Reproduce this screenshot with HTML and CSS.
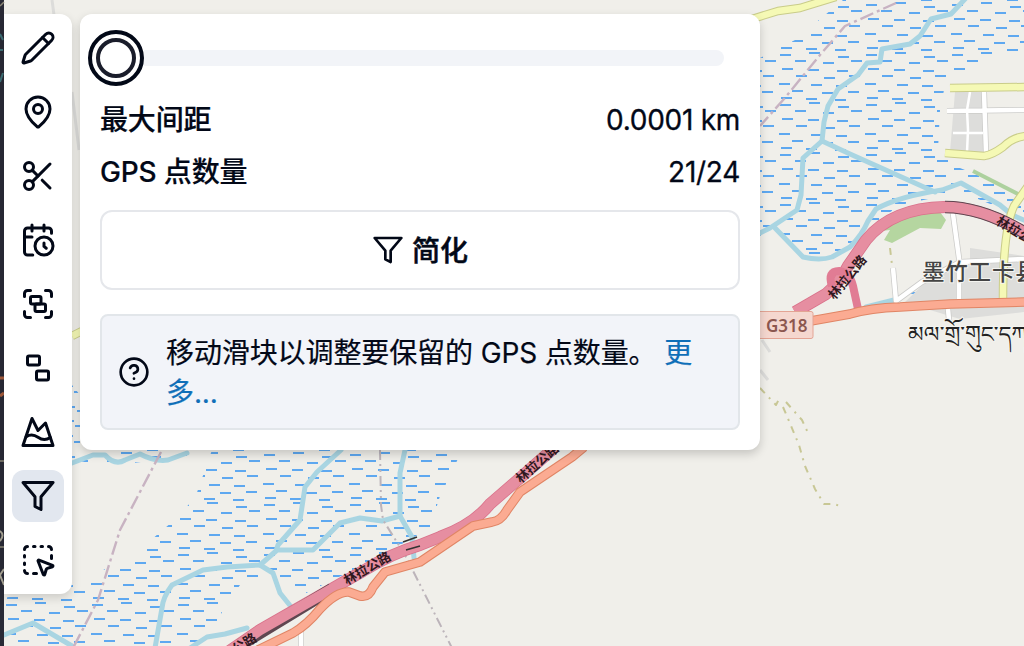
FILE: index.html
```
<!DOCTYPE html>
<html lang="zh-CN">
<head>
  <meta charset="UTF-8">
  <title>简化</title>
  <link rel="stylesheet" href="styles.css">
</head>
<body>
  <svg class="map" viewBox="0 0 1024 646" aria-hidden="true">
    <defs>
      <pattern id="marsh" width="86" height="50" patternUnits="userSpaceOnUse" patternTransform="translate(4 2)">
        <path d="M2 3h11M31 1h11M60 5h11M17 9h11M45 11h11M73 9h11M4 17h11M30 18h11M59 19h11M18 24h11M46 26h11M71 24h11M1 32h11M33 33h11M58 34h11M14 39h11M44 41h11M70 40h11M3 46h11M28 47h11M57 48h11" stroke="#5ea8f0" stroke-width="1.8"/>
      </pattern>
    </defs>

    <!-- wetland -->
    <path fill="url(#marsh)" d="M843 0H1024V50L990 58 958 76 944 90 940 110 938 150 955 166 990 180 1024 195V222L1000 208 961 192 900 205 868 228 850 247 830 258H803L775 230 760 236V58L795 40Z"/>
    <path fill="url(#marsh)" d="M212 450H462L450 476 440 496 430 528 400 545 345 574 300 596 270 578 240 585 222 612 206 646H4V598L72 584 130 558 172 522 195 498Z"/>
    <path fill="url(#marsh)" d="M72 385L80 395V448H187V456L110 466 72 460Z"/>
    <path fill="url(#marsh)" d="M868 302L950 278 945 292 895 300 866 308Z"/>

    <!-- built-up areas and parks -->
    <path fill="#dddddb" d="M955 92H985L984 152H950ZM905 302L932 276 970 264V248L1024 256V312L960 319 930 310Z"/>
    <path fill="#b5d6a0" d="M872 232L880 220 905 208 940 202V212L946 220 941 229 920 228 892 243 884 240 890 230Z"/>
    <path class="green" d="M973 171L1022 196"/>

    <!-- rivers -->
    <g class="river">
      <path d="M966 -2L951 14 931 19 920 36 910 44 882 49 880 62 867 63 858 75 838 89 828 106 824 122 822 141 803 158 801 195 797 210 770 228 758 234"/>
      <path d="M822 141L850 154 935 192"/>
      <path d="M775 228L803 257Q820 261 832 257L850 247Q862 235 868 221L876 209Q900 196 942 190L961 183 1000 205 1012 215 1026 221"/>
      <path d="M866 307L898 299"/>
      <path d="M72 463L93 455 105 455Q115 466 125 460L140 454Q155 462 168 460L187 453"/>
      <path d="M341 450L317 472 305 487 300 520 278 545 276 551 260 565 227 567 203 570 172 585Q163 597 162 608L155 648"/>
      <path d="M277 550H313L340 523 360 518 382 521 400 516"/>
      <path d="M405 450L400 473 400 516 412 537 414 558"/>
      <path d="M260 565L273 573 280 593 292 608"/>
      <path d="M190 648L207 637 225 634 247 628"/>
      <path d="M4 635L33 623 72 646"/>
    </g>

    <!-- boundaries -->
    <path class="boundary" d="M896 3L845 26 820 55 784 99 760 126M161 452L120 530 98 600 72 650"/>
    <path class="boundary thin" d="M380 450L381 505 383 520 405 555 452 648"/>
    <path class="hairline" d="M52 0L54 15M72 92L79 150M762 340L770 352M760 370L768 380"/>

    <!-- dirt tracks -->
    <path class="track" d="M760 388L776 405 780 397M783 407L789 421 799 445 805 466 815 489 824 504 834 504 843 507M786 402L793 410 802 420 809 435M890 248L892 265"/>

    <!-- minor roads -->
    <g class="road-case">
      <path d="M947 111L1024 110M984 92L986 152M952 207L959 258 959 299M893 268L896 301 922 282 960 262 1024 259M301 626V646M948 309L949 320"/>
    </g>
    <g class="road">
      <path d="M947 111L1024 110M984 92L986 152M952 207L959 258 959 299M893 268L896 301 922 282 960 262 1024 259M301 626V646M948 309L949 320"/>
      <path class="lane" d="M970 92L967 110 968 130 967 152M953 133H983"/>
    </g>
    <g class="yellow-case">
      <path d="M752 19L778 11 800 8 836 -3M950 88L1026 87M945 153L984 156Q992 155 1003 147 1013 137 1026 136M1030 183L1014 206Q1003 230 1003 298M72 336L82 331"/>
    </g>
    <g class="yellow">
      <path d="M752 19L778 11 800 8 836 -3M950 88L1026 87M945 153L984 156Q992 155 1003 147 1013 137 1026 136M1030 183L1014 206Q1003 230 1003 298M72 336L82 331"/>
    </g>

    <!-- motorway -->
    <g class="motor-case">
      <path d="M795 312L826 294Q840 282 848 266L866 240Q892 208 945 207 984 207 1030 236M225 654L260 630 363 571Q390 554 420 545L440 537Q473 525 490 504L520 478 554 448"/>
    </g>
    <path class="tunnel" d="M945 207Q984 207 1030 236M240 645L332 589"/>
    <g class="motor">
      <path d="M795 312L826 294Q840 282 848 266L866 240Q892 208 945 207 984 207 1030 236M225 654L260 630 363 571Q390 554 420 545L440 537Q473 525 490 504L520 478 554 448"/>
      <path class="ramp" d="M832 286Q827 271 839 271 850 273 853 286L858 309"/>
    </g>
    <path d="M403 542L417 537M406 550L420 546" stroke="#333" stroke-width="1.7"/>

    <!-- national road -->
    <g class="trunk-case">
      <path d="M805 322L850 314Q870 308 900 307L950 304 1026 302M258 650L293 633Q307 625 320 609 337 591 349 592L360 596Q369 598 373 587L385 572 420 562 445 545 473 526 492 522Q501 521 507 510L520 492 572 457 584 447"/>
    </g>
    <g class="trunk">
      <path d="M805 322L850 314Q870 308 900 307L950 304 1026 302M258 650L293 633Q307 625 320 609 337 591 349 592L360 596Q369 598 373 587L385 572 420 562 445 545 473 526 492 522Q501 521 507 510L520 492 572 457 584 447"/>
    </g>

    <!-- labels -->
    <g class="road-name">
      <text transform="translate(367 568) rotate(-30)" y="5">林拉公路</text>
      <text transform="translate(537 463) rotate(-41)" y="5">林拉公路</text>
      <text transform="translate(847 277) rotate(-51)" y="5">林拉公路</text>
      <text transform="translate(1020 233) rotate(32)" y="5">林拉公路</text>
      <text transform="translate(233 650) rotate(-32)" y="5">林拉公路</text>
    </g>
    <rect x="750" y="311.500" width="63" height="27" rx="2" fill="#f5d7cf" stroke="#e3a494"/>
    <text class="shield" x="766" y="332">G318</text>
    <text class="town" x="922" y="280">墨竹工卡县</text>
    <text class="town tibetan" x="908" y="342">མལ་གྲོ་གུང་དཀར</text>

    <!-- edge of the neighbouring window -->
    <path fill="#292a36" d="M0 0H4V646H0Z"/>
    <path d="M0 6L4 2M0 461H4M0 547H4" stroke="#8c8878" stroke-width="1.500"/>
    <path d="M0 34L3 40M0 50H3M0 82L3 73" stroke="#3f7177" stroke-width="2"/>
    <path d="M0 378H4M0 396L4 393" stroke="#a45b3c" stroke-width="3"/>
    <path d="M0 531Q5 535 0 541M4 569L0 575 4 585" stroke="#aaa697" stroke-width="2" fill="none"/>
  </svg>

  <main class="tools">
    <nav class="toolbar">
      <button class="tool"><svg class="icon" viewBox="0 0 24 24"><path d="M21.174 6.812a1 1 0 0 0-3.986-3.987L3.842 16.174a2 2 0 0 0-.5.83l-1.321 4.352a.5.5 0 0 0 .623.622l4.353-1.32a2 2 0 0 0 .83-.497z"/><path d="m15 5 4 4"/></svg></button>
      <button class="tool"><svg class="icon" viewBox="0 0 24 24"><path d="M20 10c0 4.993-5.539 10.193-7.399 11.799a1 1 0 0 1-1.202 0C9.539 20.193 4 14.993 4 10a8 8 0 0 1 16 0"/><circle cx="12" cy="10" r="3"/></svg></button>
      <button class="tool"><svg class="icon" viewBox="0 0 24 24"><circle cx="6" cy="6" r="3"/><path d="M8.120 8.120 12 12"/><path d="M20 4 8.120 15.880"/><circle cx="6" cy="18" r="3"/><path d="M14.800 14.800 20 20"/></svg></button>
      <button class="tool"><svg class="icon" viewBox="0 0 24 24"><path d="M21 7.500V6a2 2 0 0 0-2-2H5a2 2 0 0 0-2 2v14a2 2 0 0 0 2 2h3.500"/><path d="M16 2v4M8 2v4M3 10h5"/><path d="M17.500 17.500 16 16.300V14"/><circle cx="16" cy="16" r="6"/></svg></button>
      <button class="tool"><svg class="icon" viewBox="0 0 24 24"><path d="M3 7V5c0-1.100.9-2 2-2h2"/><path d="M17 3h2c1.100 0 2 .9 2 2v2"/><path d="M21 17v2c0 1.100-.9 2-2 2h-2"/><path d="M7 21H5c-1.100 0-2-.9-2-2v-2"/><rect width="7" height="5" x="7" y="7" rx="1"/><rect width="7" height="5" x="10" y="12" rx="1"/></svg></button>
      <button class="tool"><svg class="icon" viewBox="0 0 24 24"><rect width="8" height="6" x="5" y="4" rx="1"/><rect width="8" height="6" x="11" y="14" rx="1"/></svg></button>
      <button class="tool"><svg class="icon" viewBox="0 0 24 24"><path d="m8 3 4 8 5-5 5 15H2L8 3z"/><path d="M4.140 15.080c2.620-1.570 5.240-1.430 7.860.42 2.740 1.940 5.490 2 8.230.19"/></svg></button>
      <button class="tool active"><svg class="icon" viewBox="0 0 24 24"><path d="M22 3H2l8 9.460V19l4 2v-8.540L22 3z"/></svg></button>
      <button class="tool"><svg class="icon" viewBox="0 0 24 24"><path d="M12.034 12.681a.498.498 0 0 1 .647-.647l9 3.500a.5.5 0 0 1-.033.943l-3.444 1.068a1 1 0 0 0-.66.66l-1.067 3.443a.5.5 0 0 1-.943.033z"/><path d="M5 3a2 2 0 0 0-2 2M19 3a2 2 0 0 1 2 2M5 21a2 2 0 0 1-2-2M9 3h1M9 21h2M14 3h1M3 9v1M21 9v2M3 14v1"/></svg></button>
    </nav>

    <section class="panel">
      <div class="slider">
        <div class="thumb"></div>
        <div class="track-bar"></div>
      </div>
      <div class="row"><span class="name">最大间距</span><span class="value">0.0001 km</span></div>
      <div class="row"><span class="name">GPS 点数量</span><span class="value">21/24</span></div>
      <button class="simplify">
        <svg class="icon small" viewBox="0 0 24 24"><path d="M22 3H2l8 9.460V19l4 2v-8.540L22 3z"/></svg>
        <span>简化</span>
      </button>
      <div class="help">
        <svg class="icon small" viewBox="0 0 24 24"><circle cx="12" cy="12" r="10"/><path d="M9.090 9a3 3 0 0 1 5.830 1c0 2-3 3-3 3"/><path d="M12 17h.01"/></svg>
        <p>移动滑块以调整要保留的 GPS 点数量。 <a>更多...</a></p>
      </div>
    </section>
  </main>
</body>
</html>
```
FILE: styles.css
```
* {
  box-sizing: border-box;
}
body {
  margin: 0;
  width: 1024px;
  height: 646px;
  overflow: hidden;
  background: #f0efea;
  color: #020817;
  font-family: Inter, "Noto Sans CJK SC", sans-serif;
  font-size: 28px;
  line-height: 40px;
}
button {
  font: inherit;
  color: inherit;
  padding: 0;
  border: none;
  background: none;
}

/* map */
.map {
  position: absolute;
  left: 0;
  top: 0;
  width: 1024px;
  height: 646px;
}
.map g path,
.boundary,
.hairline,
.track,
.green,
.tunnel {
  fill: none;
  stroke-linejoin: round;
}
.river {
  stroke: #a9d5e2;
  stroke-width: 5;
  stroke-linecap: round;
}
.green {
  stroke: #add19e;
  stroke-width: 4;
}
.boundary {
  stroke: #c8b3c2;
  stroke-width: 2.4;
  stroke-dasharray: 14 4 3 4;
}
.boundary.thin {
  stroke: #bcb4ba;
  stroke-width: 2;
  stroke-dasharray: 10 4 2 4 2 4;
}
.hairline {
  stroke: #dcdcda;
  stroke-width: 3;
}
.track {
  stroke: #c8c795;
  stroke-width: 2;
  stroke-dasharray: 7 6 2 6;
}
.road-case {
  stroke: #cbcbc9;
  stroke-width: 6;
}
.road {
  stroke: #fff;
  stroke-width: 4.5;
}
.road .lane {
  stroke-width: 2.5;
}
.yellow-case {
  stroke: #c9cc8a;
  stroke-width: 8.5;
}
.yellow {
  stroke: #f5f9b5;
  stroke-width: 6.5;
}
.motor-case {
  stroke: #d9718a;
  stroke-width: 12;
}
.tunnel {
  stroke: #5f4650;
  stroke-width: 12.5;
}
.motor {
  stroke: #e68ea1;
  stroke-width: 10.5;
}
.motor .ramp {
  stroke: #e17c94;
  stroke-width: 8;
}
.trunk-case {
  stroke: #e08565;
  stroke-width: 9.5;
}
.trunk {
  stroke: #fbab92;
  stroke-width: 7.5;
}
.road-name {
  font-family: "Noto Sans CJK SC", sans-serif;
  font-size: 13px;
  font-weight: 700;
  fill: #301820;
  text-anchor: middle;
}
.shield {
  font-family: "Noto Sans", sans-serif;
  font-size: 17px;
  font-weight: 600;
  fill: #8c5750;
}
.town {
  font-family: "Noto Sans CJK SC", sans-serif;
  font-size: 22.5px;
  font-weight: 500;
  letter-spacing: 0.8px;
  fill: #444;
  stroke: #f4f4f0;
  stroke-width: 2;
  paint-order: stroke;
}
.tibetan {
  font-family: "Noto Serif Tibetan", "Noto Sans Tibetan", "DejaVu Sans", serif;
  font-weight: 400;
  letter-spacing: 0;
  fill: #222;
}

/* tools over the map */
.tools {
  position: relative;
  display: flex;
  align-items: flex-start;
  gap: 8px;
  padding: 14px 0 0 4px;
}
.toolbar {
  display: flex;
  flex-direction: column;
  align-items: center;
  gap: 12px;
  width: 68px;
  padding: 8px;
  background: #fff;
  border-radius: 0 12px 12px 0;
  box-shadow: 0 4px 10px rgba(0, 0, 0, 0.15);
}
.tool {
  display: flex;
  align-items: center;
  justify-content: center;
  width: 52px;
  height: 52px;
  border-radius: 12px;
}
.tool.active {
  background: #e2e7ef;
}
.icon {
  width: 36px;
  height: 36px;
  flex: none;
  fill: none;
  stroke: currentColor;
  stroke-width: 2;
  stroke-linecap: round;
  stroke-linejoin: round;
}
.icon.small {
  width: 32px;
  height: 32px;
}
.panel {
  width: 680px;
  height: 436px;
  padding: 16px 20px 20px;
  background: #fff;
  border-radius: 12px;
  box-shadow: 0 4px 10px rgba(0, 0, 0, 0.18);
}
.slider {
  display: flex;
  align-items: center;
  height: 56px;
  margin: 0 16px 14px -12px;
}
.track-bar {
  flex: 1;
  height: 16px;
  border-radius: 0 8px 8px 0;
  background: #f2f4f8;
}
.thumb {
  flex: none;
  width: 56px;
  height: 56px;
  padding: 4px;
  border: 4px solid #020817;
  border-radius: 50%;
}
.thumb::after {
  content: "";
  display: block;
  box-sizing: border-box;
  height: 40px;
  border: 4px solid #1a1d2b;
  border-radius: 50%;
}
.row {
  display: flex;
  justify-content: space-between;
  margin-bottom: 12px;
}
.name {
  font-weight: 500;
  letter-spacing: -0.15px;
  -webkit-text-stroke: 0.2px currentColor;
}
.value {
  letter-spacing: -0.28px;
  -webkit-text-stroke: 0.3px currentColor;
}
.simplify {
  display: flex;
  align-items: center;
  justify-content: center;
  gap: 8px;
  width: 100%;
  height: 80px;
  margin-top: 18px;
  border: 2px solid #e5e7eb;
  border-radius: 12px;
  font-weight: 500;
  -webkit-text-stroke: 0.5px currentColor;
}
.simplify span {
  padding-top: 2px;
}
.help {
  display: flex;
  align-items: center;
  gap: 16px;
  height: 116px;
  margin-top: 24px;
  padding: 0 16px;
  border: 2px solid #e2e6ea;
  border-radius: 8px;
  background: #f2f4f9;
  letter-spacing: -0.1px;
}
.help p {
  margin: 0;
  padding-top: 1px;
  -webkit-text-stroke: 0.2px currentColor;
}
.help a {
  color: #0f6fb8;
}
```
